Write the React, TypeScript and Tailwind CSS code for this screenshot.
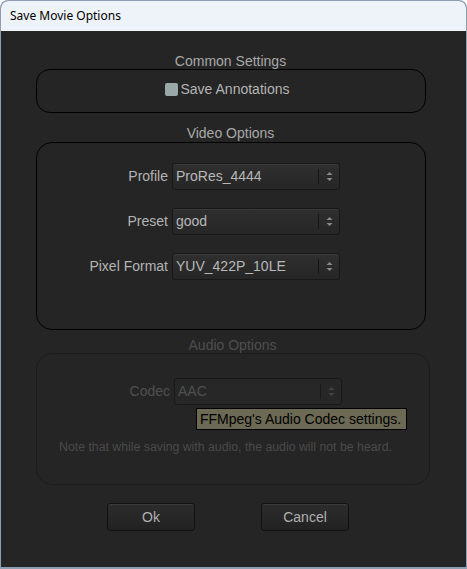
function Combo({ value, disabled }: { value: string; disabled?: boolean }) {
  const text = disabled ? "text-[#4f4f4f]" : "text-[#b8b8b8]";
  const line = disabled ? "bg-[#1a1a1a]" : "bg-[#161616]";
  const arrow = disabled ? "#444444" : "#8a8a8a";
  return (
    <div
      className={`relative flex h-[27px] w-[168px] items-center rounded-[3px] border border-[#181818] pl-[3px] text-[14px] ${text} ${
        disabled ? "bg-[#272727]" : "bg-gradient-to-b from-[#2f2f2f] to-[#262626] shadow-[inset_0_1px_0_#3a3a3a]"
      }`}
    >
      <span className="flex-1">{value}</span>
      <div className={`h-[15px] w-px ${line} mr-[7px]`} />
      <svg width="7" height="11" viewBox="0 0 7 11" className="mr-[6px]">
        <path d="M3.5 1 L6.5 4 L0.5 4 Z" fill={arrow} />
        <path d="M3.5 10 L6.5 7 L0.5 7 Z" fill={arrow} />
      </svg>
    </div>
  );
}

function Row({ label, value, disabled }: { label: string; value: string; disabled?: boolean }) {
  return (
    <div className="flex items-center">
      <div className={`w-[134px] pr-[4px] text-right text-[14px] ${disabled ? "text-[#505050]" : "text-[#b4b4b4]"}`}>
        {label}
      </div>
      <Combo value={value} disabled={disabled} />
    </div>
  );
}

function App() {
  return (
    <div
      className="h-[569px] w-[467px] overflow-hidden rounded-t-[8px] bg-[#8d9eb1] px-px pb-[2px] pt-px"
      style={{ fontFamily: '"Liberation Sans", Arial, sans-serif' }}
    >
      <div className="flex h-full flex-col rounded-t-[7px] bg-[#252525]">
        {/* title bar */}
        <div
          className="flex h-[30px] items-center rounded-t-[7px] bg-[#eef2f9] pl-[9px] text-[12px] text-black"
          style={{ fontFamily: '"Noto Sans", "Open Sans", sans-serif' }}
        >
          Save Movie Options
        </div>

        <div className="flex flex-col pl-[35px] pt-[22px]">
          {/* common settings */}
          <div className="w-[389px] text-center text-[14px] leading-[16px] text-[#a8a8a8]">Common Settings</div>
          <div className="flex h-[44px] w-[390px] items-center justify-center rounded-[14px] border border-black pb-[4px] pr-[8px]">
            <div className="mr-[3px] h-[13px] w-[13px] rounded-[2px] bg-[#9aa8a8]" />
            <span className="text-[14px] text-[#b4b4b4]">Save Annotations</span>
          </div>

          {/* video options */}
          <div className="mt-[12px] w-[389px] text-center text-[14px] leading-[16px] text-[#a8a8a8]">Video Options</div>
          <div className="mt-px flex h-[188px] w-[390px] flex-col gap-[18px] rounded-[16px] border border-black pl-px pt-[20px]">
            <Row label="Profile" value="ProRes_4444" />
            <Row label="Preset" value="good" />
            <Row label="Pixel Format" value="YUV_422P_10LE" />
          </div>

          {/* audio options */}
          <div className="mt-[7px] w-[393px] text-center text-[14px] leading-[16px] text-[#4e4e4e]">Audio Options</div>
          <div className="relative h-[132px] w-[394px] rounded-[16px] border border-[#1c1c1c] pl-[3px] pt-[24px]">
            <Row label="Codec" value="AAC" disabled />
            <div className="absolute left-[159px] top-[54px] flex h-[22px] w-[211px] items-center border border-black bg-[#6c6a55] px-[3px] text-[14px] text-black">
              FFMpeg's Audio Codec settings.
            </div>
            <div className="mt-[33px] pl-[19px] text-[12.3px] text-[#4a4a4a]">
              Note that while saving with audio, the audio will not be heard.
            </div>
          </div>

          {/* buttons */}
          <div className="mt-[18px] flex gap-[66px] pl-[71px]">
            <button className="h-[28px] w-[88px] rounded-[3px] border border-[#111] bg-gradient-to-b from-[#2c2c2c] to-[#222] text-[14px] text-[#b0b0b0] shadow-[inset_0_1px_0_#3a3a3a]">
              Ok
            </button>
            <button className="h-[28px] w-[88px] rounded-[3px] border border-[#111] bg-gradient-to-b from-[#2c2c2c] to-[#222] text-[14px] text-[#b0b0b0] shadow-[inset_0_1px_0_#3a3a3a]">
              Cancel
            </button>
          </div>
        </div>
      </div>
    </div>
  );
}

export default App;
